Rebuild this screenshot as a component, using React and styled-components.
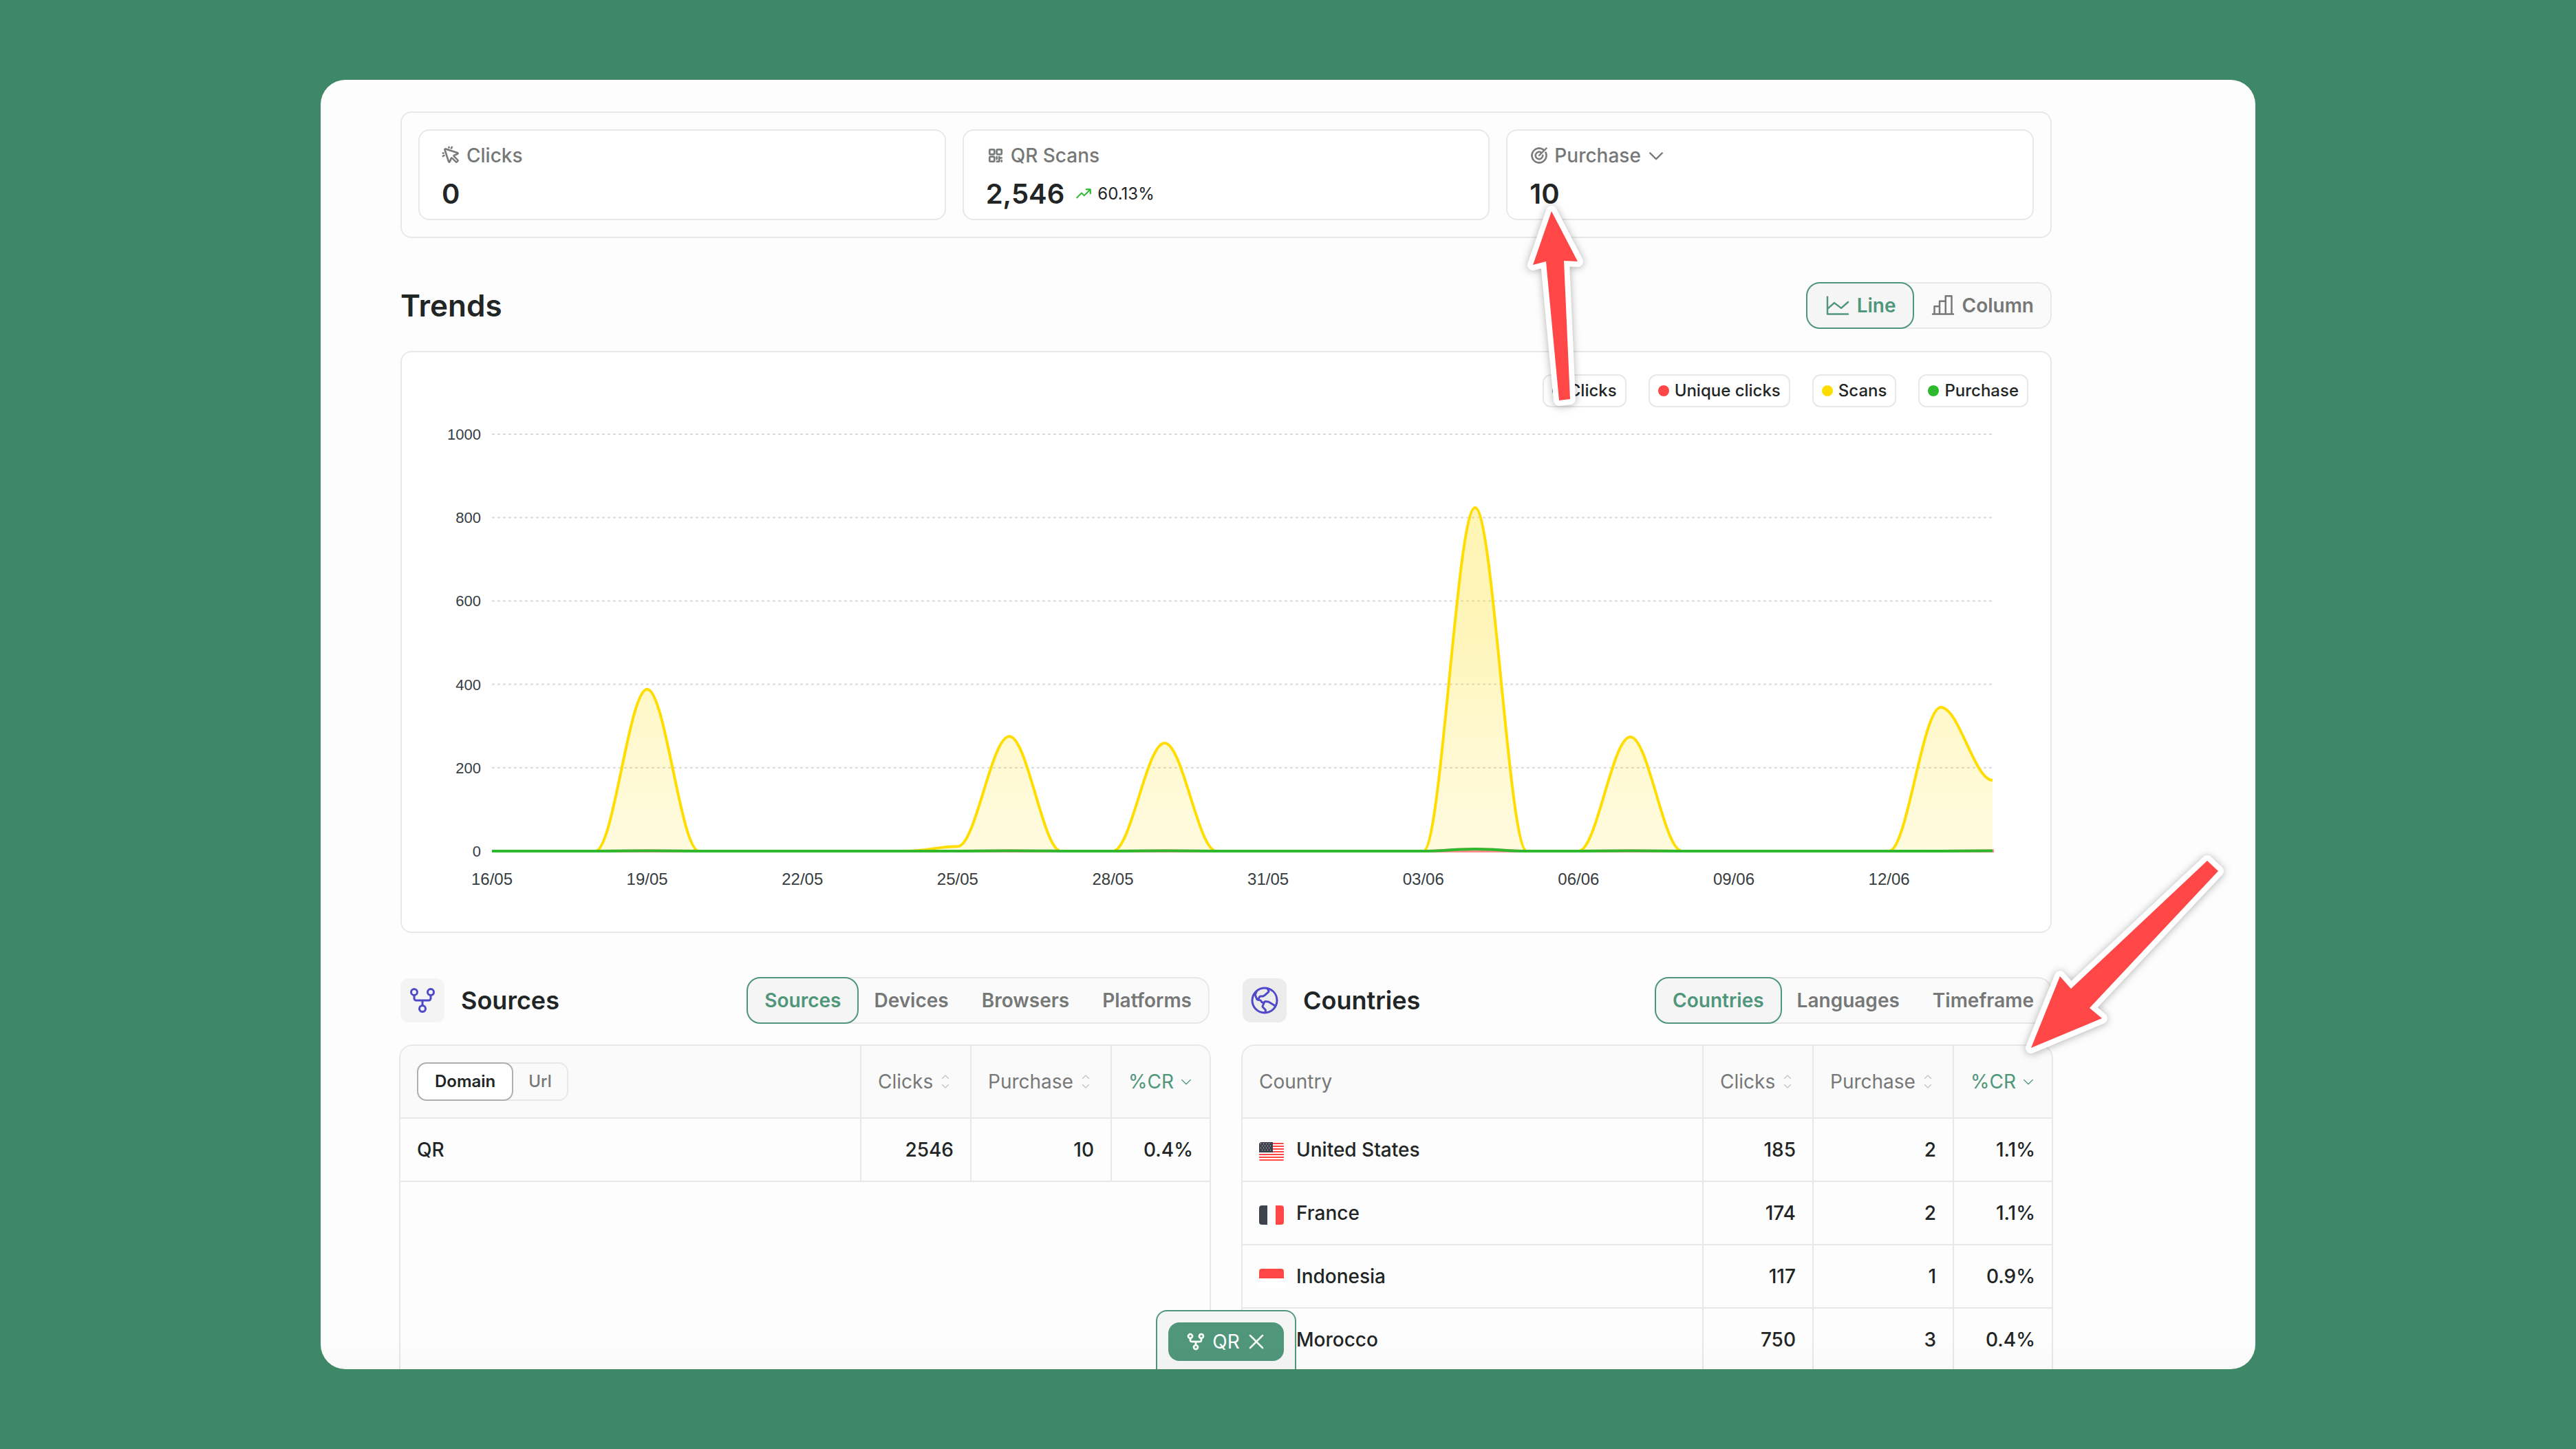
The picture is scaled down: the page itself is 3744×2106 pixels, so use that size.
import { useState } from 'react';
import styled, { createGlobalStyle, css } from 'styled-components';
import {
  PiCaretDown,
  PiCaretUpDown,
  PiChartBar,
  PiChartLine,
  PiCursorClick,
  PiGitFork,
  PiGlobeHemisphereWest,
  PiQrCode,
  PiTarget,
  PiTrendUp,
  PiX,
} from 'react-icons/pi';

const scans = Array(30).fill(0);
scans[3] = 388;
scans[9] = 11;
scans[10] = 275;
scans[13] = 259;
scans[19] = 824;
scans[22] = 274;
scans[28] = 345;
scans[29] = 170;

const purchases = Array(30).fill(0);
purchases[3] = 1;
purchases[10] = 1;
purchases[13] = 1;
purchases[19] = 5;
purchases[22] = 1;
purchases[29] = 1;

const legend = [
  { label: 'Clicks', color: '#4b45c6' },
  { label: 'Unique clicks', color: '#ff4747' },
  { label: 'Scans', color: '#ffdd00' },
  { label: 'Purchase', color: '#2eb82e' },
];

const dates = ['16/05', '19/05', '22/05', '25/05', '28/05', '31/05', '03/06', '06/06', '09/06', '12/06'];

const sources = [{ name: 'QR', clicks: 2546, purchase: 10, cr: '0.4%' }];

const countries = [
  { name: 'United States', flag: 'us', clicks: 185, purchase: 2, cr: '1.1%' },
  { name: 'France', flag: 'fr', clicks: 174, purchase: 2, cr: '1.1%' },
  { name: 'Indonesia', flag: 'id', clicks: 117, purchase: 1, cr: '0.9%' },
  { name: 'Morocco', flag: 'ma', clicks: 750, purchase: 3, cr: '0.4%' },
];

// chart geometry
const LEFT = 131;
const RIGHT = 2312;
const TOP = 39;
const BASE = 645;
const STEP = (RIGHT - LEFT) / 29;

const px = (i) => LEFT + i * STEP;
const py = (v) => BASE - (v / 1000) * (BASE - TOP);

const smooth = (values) =>
  values.reduce((d, v, i) => {
    if (i === 0) return `M${px(0)} ${py(v)}`;
    const k = STEP * 0.35;
    return `${d}C${px(i - 1) + k} ${py(values[i - 1])} ${px(i) - k} ${py(v)} ${px(i)} ${py(v)}`;
  }, '');

const area = (values) => `${smooth(values)}L${RIGHT} ${BASE}L${LEFT} ${BASE}Z`;

function TrendChart() {
  return (
    <Chart viewBox='0 0 2396 762' role='img' aria-label='Trends'>
      <defs>
        <linearGradient id='scanFill' x1='0' y1='0' x2='0' y2='1'>
          <stop offset='0' stopColor='#fddc10' stopOpacity='0.32' />
          <stop offset='0.35' stopColor='#fddc10' stopOpacity='0.29' />
          <stop offset='0.65' stopColor='#ffdd00' stopOpacity='0.19' />
          <stop offset='1' stopColor='#ffdd00' stopOpacity='0.13' />
        </linearGradient>
      </defs>
      {[0, 200, 400, 600, 800, 1000].map((v) => (
        <g key={v}>
          <line x1={LEFT} x2={RIGHT} y1={py(v)} y2={py(v)} stroke='#d9d9d9' strokeWidth='2' strokeDasharray='4 4' />
          <AxisY x='115' y={py(v) + 8}>
            {v}
          </AxisY>
        </g>
      ))}
      <path d={area(scans)} fill='url(#scanFill)' />
      <path d={smooth(scans)} fill='none' stroke='#ffdd00' strokeWidth='4' />
      <path d={area(purchases)} fill='#ff8a8a' stroke='#ff8a8a' strokeWidth='4' />
      <path d={smooth(purchases)} fill='none' stroke='#2eb82e' strokeWidth='4' />
      {dates.map((d, i) => (
        <AxisX key={d} x={px(i * 3)} y='694'>
          {d}
        </AxisX>
      ))}
    </Chart>
  );
}

function FlagIcon({ code }) {
  return (
    <Flag viewBox='0 0 36 28' aria-hidden='true'>
      {code === 'us' && (
        <>
          <rect width='36' height='28' fill='#fff' />
          {[0, 4, 8, 12, 16, 20, 24].map((y) => (
            <rect key={y} y={y + 1} width='36' height='2' fill='#ff4747' />
          ))}
          <rect width='20' height='15' fill='#3f434d' />
          {[2, 5, 8, 11].map((y) =>
            [2, 6, 10, 14].map((x) => (
              <rect key={`${x}-${y}`} x={x + (y % 2) * 2} y={y} width='1' height='1' fill='#e6e8eb' />
            ))
          )}
        </>
      )}
      {code === 'fr' && (
        <>
          <rect width='36' height='28' fill='#fff' />
          <rect width='12' height='28' fill='#3f434d' />
          <rect x='24' width='12' height='28' fill='#ff4747' />
        </>
      )}
      {code === 'id' && (
        <>
          <rect width='36' height='28' fill='#fff' />
          <rect width='36' height='14' fill='#ff4747' />
        </>
      )}
      {code === 'ma' && <rect width='36' height='28' fill='#ff4747' />}
    </Flag>
  );
}

function Tabs({ items, initial = 0 }) {
  const [active, setActive] = useState(initial);
  return (
    <TabGroup>
      {items.map(({ label, icon }, i) => (
        <Tab key={label} type='button' $active={i === active} onClick={() => setActive(i)}>
          {icon}
          {label}
        </Tab>
      ))}
    </TabGroup>
  );
}

function StatsTable({ first, rows }) {
  return (
    <TableBox>
      <Table>
        <colgroup>
          <col />
          <Col $width={160} />
          <Col $width={204} />
          <Col $width={144} />
        </colgroup>
        <thead>
          <tr>
            <Th>{first}</Th>
            <Th>
              <SortButton type='button'>
                Clicks
                <PiCaretUpDown />
              </SortButton>
            </Th>
            <Th>
              <SortButton type='button'>
                Purchase
                <PiCaretUpDown />
              </SortButton>
            </Th>
            <Th>
              <SortButton type='button' $sorted>
                %CR
                <PiCaretDown />
              </SortButton>
            </Th>
          </tr>
        </thead>
        <tbody>
          {rows.map((row) => (
            <tr key={row.name}>
              <Td>
                <NameCell>
                  {row.flag && <FlagIcon code={row.flag} />}
                  {row.name}
                </NameCell>
              </Td>
              <Td $num>{row.clicks}</Td>
              <Td $num>{row.purchase}</Td>
              <Td $num>{row.cr}</Td>
            </tr>
          ))}
        </tbody>
      </Table>
    </TableBox>
  );
}

function App() {
  const [level, setLevel] = useState('Domain');

  return (
    <Page>
      <GlobalStyle />
      <Window>
        <Content>
          <StatPanel>
            <StatCard>
              <StatLabel>
                <PiCursorClick />
                Clicks
              </StatLabel>
              <StatValue>0</StatValue>
            </StatCard>
            <StatCard>
              <StatLabel>
                <PiQrCode />
                QR Scans
              </StatLabel>
              <StatValue>
                2,546
                <Growth>
                  <PiTrendUp />
                  60.13%
                </Growth>
              </StatValue>
            </StatCard>
            <StatCard>
              <StatLabel as='button' type='button'>
                <PiTarget />
                Purchase
                <PiCaretDown />
              </StatLabel>
              <StatValue>10</StatValue>
              <ValueArrow viewBox='0 0 100 310' aria-hidden='true'>
                <path d='M46 23L19 101L38 96L57 298L73 296L64 95L84 96Z' />
              </ValueArrow>
            </StatCard>
          </StatPanel>

          <Section>
            <SectionHead>
              <Title $large>Trends</Title>
              <Tabs
                items={[
                  { label: 'Line', icon: <PiChartLine /> },
                  { label: 'Column', icon: <PiChartBar /> },
                ]}
              />
            </SectionHead>
            <ChartPanel>
              <Legend>
                {legend.map((item) => (
                  <LegendItem key={item.label} $color={item.color}>
                    {item.label}
                  </LegendItem>
                ))}
              </Legend>
              <TrendChart />
            </ChartPanel>
          </Section>

          <Columns>
            <Section>
              <SectionHead>
                <Heading>
                  <IconTile>
                    <PiGitFork />
                  </IconTile>
                  <Title>Sources</Title>
                </Heading>
                <Tabs
                  items={[{ label: 'Sources' }, { label: 'Devices' }, { label: 'Browsers' }, { label: 'Platforms' }]}
                />
              </SectionHead>
              <StatsTable
                rows={sources}
                first={
                  <LevelGroup>
                    {['Domain', 'Url'].map((name) => (
                      <LevelButton key={name} type='button' $active={name === level} onClick={() => setLevel(name)}>
                        {name}
                      </LevelButton>
                    ))}
                  </LevelGroup>
                }
              />
            </Section>
            <Section>
              <SectionHead>
                <Heading>
                  <IconTile $dark>
                    <PiGlobeHemisphereWest />
                  </IconTile>
                  <Title>Countries</Title>
                </Heading>
                <Tabs items={[{ label: 'Countries' }, { label: 'Languages' }, { label: 'Timeframe' }]} />
              </SectionHead>
              <StatsTable rows={countries} first='Country' />
              <ColumnArrow viewBox='0 0 320 320' aria-hidden='true'>
                <path d='M22 293L64 189L80 207L278 21L294 36L107 235L125 250Z' />
              </ColumnArrow>
            </Section>
          </Columns>
        </Content>

        <FilterDock>
          <FilterBox>
            <FilterChip type='button'>
              <PiGitFork />
              QR
              <PiX />
            </FilterChip>
          </FilterBox>
        </FilterDock>
      </Window>
    </Page>
  );
}

export default App;

const GlobalStyle = createGlobalStyle`
  * {
    box-sizing: border-box;
  }

  body {
    margin: 0;
    background: #3f8867;
    color: #222525;
    font-family: Inter, 'Liberation Sans', sans-serif;
    font-size: 28px;
    line-height: 40px;
  }

  button {
    margin: 0;
    padding: 0;
    border: 0;
    background: none;
    color: inherit;
    font: inherit;
    cursor: pointer;
  }

  svg {
    flex: none;
  }
`;

const Page = styled.main`
  height: 100vh;
  padding: 116px 466px;
`;

const Window = styled.div`
  position: relative;
  height: 100%;
  overflow: hidden;
  border-radius: 36px;
  background: #fdfdfd;

  &::after {
    content: '';
    position: absolute;
    inset: auto 0 0 0;
    height: 40px;
    background: linear-gradient(transparent, rgba(0, 0, 0, 0.015));
    pointer-events: none;
  }
`;

const Content = styled.div`
  display: flex;
  flex-direction: column;
  gap: 64px;
  padding: 46px 296px 0 116px;
`;

const StatPanel = styled.section`
  display: grid;
  grid-template-columns: repeat(3, 1fr);
  gap: 24px;
  padding: 24px;
  border: 2px solid #e8e8e8;
  border-radius: 16px;
`;

const StatCard = styled.div`
  position: relative;
  display: flex;
  flex-direction: column;
  align-items: flex-start;
  gap: 12px;
  padding: 16px 32px 12px;
  border: 2px solid #e8e8e8;
  border-radius: 16px;
  background: #fff;
`;

const StatLabel = styled.div`
  display: flex;
  align-items: center;
  gap: 8px;
  color: #757877;
  font-weight: 500;

  svg {
    stroke-width: 8px;
  }
`;

const StatValue = styled.div`
  display: flex;
  align-items: center;
  gap: 16px;
  font-size: 40px;
  font-weight: 600;
  line-height: 48px;
`;

const Growth = styled.span`
  display: flex;
  align-items: center;
  gap: 8px;
  font-size: 24px;
  font-weight: 400;

  svg {
    color: #2eb82e;
    stroke-width: 8px;
  }
`;

const Section = styled.section`
  position: relative;
  min-width: 0;
`;

const SectionHead = styled.header`
  display: flex;
  align-items: center;
  justify-content: space-between;
`;

const Title = styled.h2`
  margin: 0;
  font-size: ${({ $large }) => ($large ? '44px' : '36px')};
  font-weight: 600;
`;

const Heading = styled.div`
  display: flex;
  align-items: center;
  gap: 24px;
`;

const IconTile = styled.span`
  display: flex;
  align-items: center;
  justify-content: center;
  width: 64px;
  height: 64px;
  border-radius: 12px;
  background: ${({ $dark }) => ($dark ? '#ececec' : '#f4f4f4')};
  color: #4f49c8;
  font-size: 48px;
`;

const TabGroup = styled.div`
  display: flex;
  border: 2px solid #e8e8e8;
  border-radius: 20px;
  background: #fafafa;
`;

const Tab = styled.button`
  display: flex;
  align-items: center;
  gap: 8px;
  height: 64px;
  padding: 0 24px;
  color: #757877;
  font-weight: 600;

  svg {
    font-size: 40px;
  }

  ${({ $active }) =>
    $active &&
    css`
      height: 68px;
      margin: -2px;
      border: 2px solid #4f967b;
      border-radius: 20px;
      background: #f4f5f4;
      color: #4f967b;
    `}
`;

const ChartPanel = styled.div`
  margin-top: 32px;
  border: 2px solid #e8e8e8;
  border-radius: 16px;
  background: #fff;
`;

const Legend = styled.ul`
  display: flex;
  justify-content: flex-end;
  gap: 32px;
  margin: 0;
  padding: 32px 32px 0;
  list-style: none;
`;

const LegendItem = styled.li`
  display: flex;
  align-items: center;
  gap: 8px;
  height: 48px;
  padding: 0 12px;
  border: 2px solid #e8e8e8;
  border-radius: 12px;
  font-size: 24px;
  font-weight: 500;

  &::before {
    content: '';
    width: 16px;
    height: 16px;
    border-radius: 50%;
    background: ${({ $color }) => $color};
  }
`;

const Chart = styled.svg`
  display: block;
  width: 100%;
`;

const AxisY = styled.text`
  fill: #373d3f;
  font-family: 'Liberation Sans', sans-serif;
  font-size: 22px;
  text-anchor: end;
`;

const AxisX = styled(AxisY)`
  font-size: 24px;
  text-anchor: middle;
`;

const Columns = styled.div`
  display: grid;
  grid-template-columns: 1fr 1fr;
  gap: 48px;
`;

const TableBox = styled.div`
  min-height: 600px;
  margin: 30px -2px 0;
  overflow: hidden;
  border: 2px solid #e8e8e8;
  border-radius: 20px;
`;

const Table = styled.table`
  width: 100%;
  border-collapse: separate;
  border-spacing: 0;
  table-layout: fixed;
`;

const Col = styled.col`
  width: ${({ $width }) => $width}px;
`;

const cell = css`
  padding: 0 24px;
  border-bottom: 2px solid #e8e8e8;

  & + & {
    border-left: 2px solid #e8e8e8;
  }
`;

const Th = styled.th`
  ${cell}
  height: 106px;
  background: #fafafa;
  color: #757877;
  font-weight: 400;
  text-align: left;
`;

const Td = styled.td`
  ${cell}
  height: 92px;
  font-weight: 500;
  text-align: ${({ $num }) => ($num ? 'right' : 'left')};
`;

const SortButton = styled.button`
  display: flex;
  align-items: center;
  justify-content: space-between;
  width: 100%;
  color: ${({ $sorted }) => ($sorted ? '#4f967b' : 'inherit')};

  svg {
    color: ${({ $sorted }) => ($sorted ? '#4f967b' : '#c4c6c5')};
    font-size: ${({ $sorted }) => ($sorted ? '20px' : '24px')};
  }
`;

const NameCell = styled.span`
  display: flex;
  align-items: center;
  gap: 18px;
`;

const Flag = styled.svg`
  width: 36px;
  height: 28px;
  margin-top: 6px;
  border-radius: 4px;
`;

const LevelGroup = styled.div`
  display: inline-flex;
  border: 2px solid #e8e8e8;
  border-radius: 14px;
  vertical-align: middle;
`;

const LevelButton = styled.button`
  height: 52px;
  padding: 0 22px;
  font-size: 24px;
  font-weight: 500;

  ${({ $active }) =>
    $active &&
    css`
      height: 56px;
      margin: -2px 0 -2px -2px;
      padding: 0 24px;
      border: 2px solid #adb0af;
      border-radius: 14px;
      background: #fff;
      color: #222525;
      font-weight: 600;
    `}
`;

const Arrow = styled.svg`
  position: absolute;
  z-index: 2;
  overflow: visible;
  pointer-events: none;
  filter: drop-shadow(0 1px 6px rgba(0, 0, 0, 0.3));

  path {
    fill: #ff4747;
    stroke: #fff;
    stroke-width: 16px;
    stroke-linejoin: round;
    paint-order: stroke;
  }
`;

const ValueArrow = styled(Arrow)`
  top: 94px;
  left: 18px;
  width: 100px;
  height: 310px;
`;

const ColumnArrow = styled(Arrow)`
  top: -190px;
  right: -268px;
  width: 320px;
  height: 320px;
`;

const FilterDock = styled.div`
  position: absolute;
  right: 296px;
  bottom: 0;
  left: 116px;
  display: flex;
  justify-content: center;
  pointer-events: none;
`;

const FilterBox = styled.div`
  padding: 16px 16px 12px;
  border: 2px solid #4f967b;
  border-bottom: 0;
  border-radius: 16px 16px 0 0;
  background: #f4f5f4;
  pointer-events: auto;
`;

const FilterChip = styled.button`
  display: flex;
  align-items: center;
  gap: 8px;
  height: 56px;
  padding: 0 24px;
  border-radius: 16px;
  background: #4f967b;
  color: #fff;
  font-weight: 400;

  svg {
    font-size: 32px;
    stroke-width: 6px;
  }
`;
